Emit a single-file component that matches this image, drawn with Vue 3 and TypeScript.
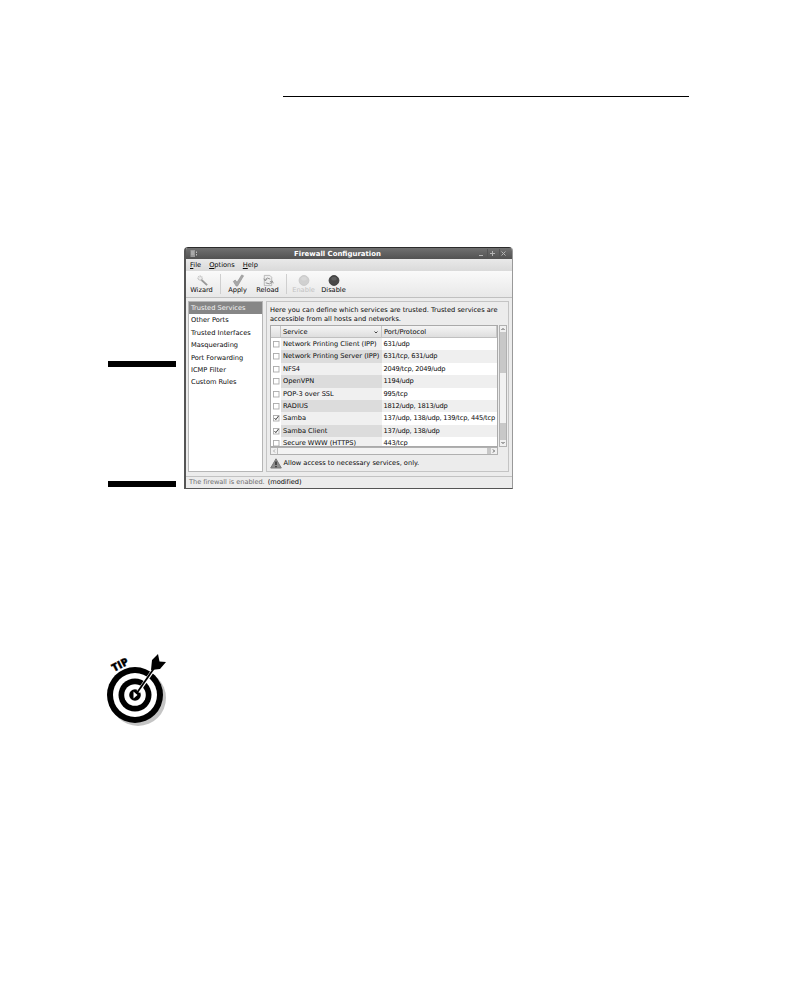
<script setup lang="ts">
interface Service {
  name: string
  ports: string
  on?: boolean
}

const sections: string[] = [
  'Trusted Services',
  'Other Ports',
  'Trusted Interfaces',
  'Masquerading',
  'Port Forwarding',
  'ICMP Filter',
  'Custom Rules',
]

const services: Service[] = [
  { name: 'Network Printing Client (IPP)', ports: '631/udp' },
  { name: 'Network Printing Server (IPP)', ports: '631/tcp, 631/udp' },
  { name: 'NFS4', ports: '2049/tcp, 2049/udp' },
  { name: 'OpenVPN', ports: '1194/udp' },
  { name: 'POP-3 over SSL', ports: '995/tcp' },
  { name: 'RADIUS', ports: '1812/udp, 1813/udp' },
  { name: 'Samba', ports: '137/udp, 138/udp, 139/tcp, 445/tcp', on: true },
  { name: 'Samba Client', ports: '137/udp, 138/udp', on: true },
  { name: 'Secure WWW (HTTPS)', ports: '443/tcp' },
]
</script>

<template>
  <main class="page">
    <div class="rule"></div>
    <section class="figure">
      <div class="bars">
        <div class="bar"></div>
        <div class="bar"></div>
      </div>
      <div class="window">
        <header class="title">
          <svg class="app-icon" viewBox="0 0 10 9">
            <rect x="1.500" y="1" width="4.500" height="7" fill="#999" />
            <path d="M2 3h3M2 5h3M7.500 2.500v1.500M7.500 5v1.500" stroke="#bbb" />
          </svg>
          <span class="title-text">Firewall Configuration</span>
          <svg class="controls" viewBox="0 0 36 11">
            <path d="M11.500 1v9M23.500 1v9" stroke="#555" />
            <path d="M3 7.500h4M14 5.500h5M16.500 3v5M25.500 3.500l4 4M29.500 3.500l-4 4" stroke="#b4b4b4" fill="none" />
          </svg>
        </header>
        <nav class="menu">
          <span><u>F</u>ile</span>
          <span><u>O</u>ptions</span>
          <span><u>H</u>elp</span>
        </nav>
        <div class="toolbar">
          <div class="tool wizard">
            <svg viewBox="0 0 14 14">
              <path d="M6.500 6.500l6 5.500" stroke="#999" stroke-width="2" />
              <path d="M5 1.500v6M2 4.500h6M3 2.500l4 4M7 2.500l-4 4" stroke="#aaa" stroke-width=".9" />
              <circle cx="5" cy="4.500" r="1.400" fill="#eee" />
            </svg>
            <span>Wizard</span>
          </div>
          <i class="sep"></i>
          <div class="tool apply">
            <svg viewBox="0 0 14 14">
              <path d="M2 8l2-1.500 2 2.500L11 1l2 1-6.500 11H5z" fill="#a8a8a8" stroke="#909090" stroke-width=".7" />
            </svg>
            <span>Apply</span>
          </div>
          <div class="tool reload">
            <svg viewBox="0 0 14 14">
              <path d="M3 1.500h6l2 2v9H3z" fill="#eee" stroke="#aaa" stroke-width=".8" />
              <path d="M9.500 5.500Q6 3 4 6M2.500 5L4 7.500 6 5.500M4.500 9.500Q9 12 11.500 9M9 8.500l2.500-1 1.200 2.500" fill="none" stroke="#8c8c8c" />
            </svg>
            <span>Reload</span>
          </div>
          <i class="sep"></i>
          <div class="tool enable off">
            <svg viewBox="0 0 14 14">
              <circle cx="7" cy="7" r="5.300" fill="#d0d0d0" stroke="#c8c8c8" />
              <ellipse cx="7" cy="5" rx="3" ry="2" fill="#d8d8d8" />
            </svg>
            <span>Enable</span>
          </div>
          <div class="tool disable">
            <svg viewBox="0 0 14 14">
              <circle cx="7" cy="7" r="5.300" fill="#484848" stroke="#3a3a3a" />
              <ellipse cx="7" cy="5" rx="3" ry="2" fill="#5e5e5e" />
            </svg>
            <span>Disable</span>
          </div>
        </div>
        <div class="content">
          <ul class="side">
            <li v-for="(s, i) in sections" :key="s" :class="{ active: i === 0 }">{{ s }}</li>
          </ul>
          <div class="panel">
            <p class="intro">Here you can define which services are trusted. Trusted services are<br />accessible from all hosts and networks.</p>
            <div class="grid">
              <div class="table">
                <div class="row head">
                  <span class="check"></span>
                  <span class="name">Service
                    <svg class="sort" viewBox="0 0 6 5"><path d="M1.500 1.500L3 3l1.500-1.500" fill="none" stroke="#444" /></svg>
                  </span>
                  <span class="ports">Port/Protocol</span>
                </div>
                <div v-for="s in services" :key="s.name" class="row body">
                  <span class="check">
                    <svg viewBox="0 0 7 7">
                      <rect x=".5" y=".5" width="5.500" height="5.500" fill="#fff" stroke="#aaa" stroke-width=".9" />
                      <path v-if="s.on" d="M1.500 3l1.300 1.700L5.500 1" fill="none" stroke="#444" />
                    </svg>
                  </span>
                  <span class="name">{{ s.name }}</span>
                  <span class="ports">{{ s.ports }}</span>
                </div>
              </div>
              <div class="vscroll">
                <svg viewBox="0 0 6 6"><path d="M1.500 4L3 2.500 4.500 4" fill="none" stroke="#555" /></svg>
                <div class="vthumb"></div>
                <svg viewBox="0 0 6 6"><path d="M1.500 2L3 3.500 4.500 2" fill="none" stroke="#555" /></svg>
              </div>
              <div class="hscroll">
                <svg viewBox="0 0 6 6"><path d="M4 1.500L2.500 3 4 4.500" fill="none" stroke="#aaa" /></svg>
                <div class="hthumb"></div>
                <svg viewBox="0 0 6 6"><path d="M2 1.500L3.500 3 2 4.500" fill="none" stroke="#555" /></svg>
              </div>
            </div>
            <div class="note">
              <svg viewBox="0 0 12 11">
                <path d="M6 .8L11.300 10H.7z" fill="#8c8c8c" stroke="#777" stroke-linejoin="round" />
                <path d="M6 3.500v3.500M6 8v1.200" stroke="#222" stroke-width="1.300" />
              </svg>
              <span>Allow access to necessary services, only.</span>
            </div>
          </div>
        </div>
        <footer class="status"><span class="state">The firewall is enabled.</span><span>(modified)</span></footer>
      </div>
    </section>
    <svg class="tip" viewBox="0 0 64 76">
      <circle cx="32" cy="46" r="28" fill="#c4c4c4" />
      <circle cx="29" cy="43" r="28" fill="#000" />
      <circle cx="29" cy="43" r="22" fill="#fff" />
      <circle cx="29" cy="43" r="16.500" fill="#000" />
      <circle cx="29" cy="43" r="10.800" fill="#fff" />
      <circle cx="29" cy="43" r="5.800" fill="#000" />
      <path d="M27.500 39.500l4 3.500-4 3.500z" fill="#fff" />
      <path d="M32 40L50 14" stroke="#fff" stroke-width="3.400" />
      <path d="M30.500 41.500L51 12" stroke="#000" stroke-width="1.800" />
      <path d="M45 18l1-10 6-6 1.500 7.500L60 10l-6 7z" fill="#000" />
      <text x="8" y="20" transform="rotate(-27 8 20)">TIP</text>
    </svg>
  </main>
</template>

<style>
body {
  margin: 0;
  background: #fff;
}
</style>

<style scoped>
.page {
  box-sizing: border-box;
  width: 797px;
  height: 999px;
  padding-top: 96px;
  background: #fff;
  overflow: hidden;
  font-family: "DejaVu Sans", sans-serif;
  font-size: 6.65px;
  color: #080808;
}
.rule {
  width: 406px;
  height: 1px;
  margin-left: 283px;
  background: #000;
}
.figure {
  display: flex;
  margin: 150px 0 0 108px;
}
.bars {
  display: flex;
  flex-direction: column;
  justify-content: space-between;
  width: 68px;
  height: 126px;
  margin: 114px 8px 0 0;
}
.bar {
  height: 6px;
  background: #000;
}
.window {
  box-sizing: border-box;
  width: 329px;
  height: 242px;
  border: 1px solid #555;
  border-left-width: 2px;
  border-top: 0;
  border-right-color: #999;
  border-radius: 4px 4px 0 0;
  background: #ececec;
  overflow: hidden;
}
.title {
  display: flex;
  align-items: center;
  height: 12px;
  border-top: 1px solid #2c2c2c;
  box-sizing: border-box;
  background: linear-gradient(#707070, #525252);
  color: #fff;
  font-weight: bold;
  font-size: 6.95px;
}
.app-icon {
  width: 10px;
  height: 9px;
  margin-left: 3px;
}
.title-text {
  flex: 1;
  text-align: center;
}
.controls {
  width: 36px;
  height: 11px;
}
.menu {
  display: flex;
  align-items: center;
  gap: 8px;
  height: 12px;
  padding-left: 4px;
  background: linear-gradient(#e9e9e9, #dadada);
}
.menu u {
  text-underline-offset: 0.5px;
  text-decoration-thickness: 1px;
}
.toolbar {
  display: flex;
  box-sizing: border-box;
  height: 27px;
  padding: 3px 0 0 0.5px;
  border-bottom: 1px solid #c0c0c0;
  background: linear-gradient(#fafafa, #e8e8e8);
}
.tool {
  display: flex;
  flex-direction: column;
  align-items: center;
  width: 30px;
  line-height: 7px;
  white-space: nowrap;
}
.tool svg {
  width: 14px;
  height: 13px;
}
.off {
  color: #c2c2c2;
}
.sep {
  width: 1px;
  height: 20px;
  margin: 0 2px 0 3px;
  background: #cfcfcf;
}
.content {
  display: flex;
  gap: 3px;
  height: 171px;
  padding: 3px 3px 4px 2px;
}
.side {
  box-sizing: border-box;
  width: 76px;
  margin: 0;
  padding: 0;
  border: 1px solid #b6b6b6;
  list-style: none;
  background: #fff;
}
.side li {
  height: 12.4px;
  padding-left: 2px;
  line-height: 12.4px;
  white-space: nowrap;
}
.side .active {
  background: #868686;
  color: #f4f4f4;
}
.panel {
  box-sizing: border-box;
  width: 243px;
  padding: 4px 2px 0 3px;
  border: 1px solid #c4c4c4;
}
.intro {
  margin: 0;
  height: 19px;
  line-height: 8.6px;
  white-space: nowrap;
}
.grid {
  display: grid;
  grid-template-columns: 228px 8px;
  grid-template-rows: 122px 8px;
  column-gap: 1px;
}
.table {
  box-sizing: border-box;
  border: 1px solid #aaa;
  background: #fff;
  overflow: hidden;
}
.row {
  display: grid;
  grid-template-columns: 10px 101px 115px;
  height: 12.4px;
  line-height: 12.4px;
  white-space: nowrap;
}
.row span {
  overflow: hidden;
}
.head {
  height: 12px;
  line-height: 12px;
  background: linear-gradient(#f5f5f5, #dcdcdc);
}
.head span {
  box-sizing: border-box;
  border-right: 1px solid #c6c6c6;
  border-bottom: 1px solid #c0c0c0;
}
.name {
  display: flex;
  justify-content: space-between;
  padding-left: 2px;
  letter-spacing: -0.01px;
}
.sort {
  width: 6px;
  height: 5px;
  margin: 4px 2px 0 0;
}
.ports {
  padding-left: 2px;
}
.body .ports {
  padding-left: 1.5px;
  letter-spacing: -0.21px;
}
.body .name {
  background: #f0f0f0;
}
.body:nth-child(odd) .name {
  background: #dcdcdc;
}
.body:nth-child(odd) .ports {
  background: #efefef;
}
.check svg {
  display: block;
  width: 7px;
  height: 7px;
  margin: 3px 0 0 2px;
}
.vscroll {
  display: flex;
  flex-direction: column;
  justify-content: space-between;
  box-sizing: border-box;
  border: 1px solid #b0b0b0;
  background: #c8c8c8;
}
.vscroll svg,
.hscroll svg {
  flex: none;
  width: 6px;
  height: 6px;
  background: #f0f0f0;
}
.vthumb {
  height: 50px;
  margin-top: 23px;
  background: #f2f2f2;
}
.hscroll {
  display: flex;
  align-items: center;
  box-sizing: border-box;
  border: 1px solid #b0b0b0;
  background: #c8c8c8;
}
.hthumb {
  width: 209px;
  height: 6px;
  margin-right: auto;
  border-left: 1px solid #bbb;
  background: #f3f3f3;
}
.note {
  display: flex;
  align-items: center;
  gap: 1.5px;
  height: 16px;
}
.note svg {
  width: 12px;
  height: 11px;
}
.status {
  height: 12px;
  padding-left: 3px;
  border-top: 1px solid #c2c2c2;
  line-height: 11px;
  letter-spacing: -0.05px;
}
.state {
  margin-right: 3px;
  color: #6c6c6c;
}
.tip {
  display: block;
  width: 64px;
  height: 76px;
  margin: 163px 0 0 106px;
}
.tip text {
  font: 800 11px "Open Sans", sans-serif;
  fill: #000;
  stroke: #000;
  stroke-width: 0.3px;
}
</style>
